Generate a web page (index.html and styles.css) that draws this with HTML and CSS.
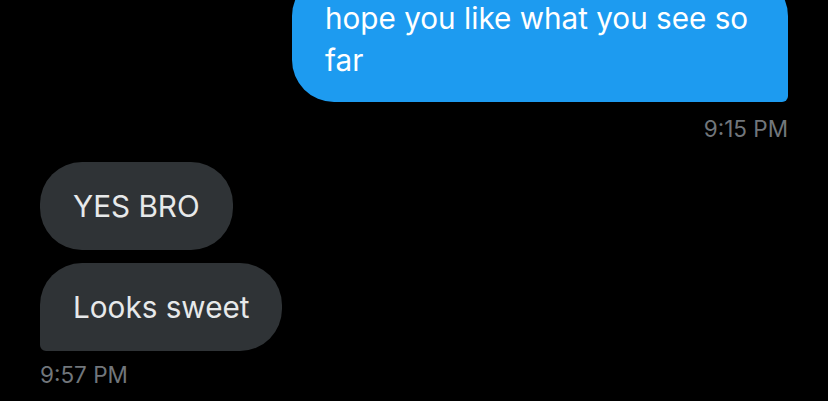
FILE: index.html
```html
<!DOCTYPE html>
<html lang="en">
  <head>
    <meta name="viewport" content="width=device-width, initial-scale=1.0" />
    <title>Messages</title>
    <link rel="stylesheet" href="styles.css">
  </head>
  <body>
    <div class="chat">
      <div class="msg out">
        <div class="bubble">hope you like what you see so far</div>
        <div class="time">9:15 PM</div>
      </div>
      <div class="msg in">
        <div class="bubble">YES BRO</div>
        <div class="bubble last">Looks sweet</div>
        <div class="time">9:57 PM</div>
      </div>
    </div>
  </body>
</html>
```

FILE: styles.css
```css
* {
  padding: 0;
  margin: 0;
  box-sizing: border-box;
  font-family: "Inter", "Liberation Sans", sans-serif;
}
body {
  background-color: #000;
  overflow: hidden;
}
.chat {
  padding: 0 40px;
  margin-top: -26px;
}
.msg {
  display: flex;
  flex-direction: column;
}
.msg.out {
  align-items: flex-end;
}
.msg.in {
  align-items: flex-start;
  margin-top: 18px;
}
.bubble {
  font-size: 29.7px;
  line-height: 42px;
  padding: 23px 33px;
  border-radius: 42px;
}
.out .bubble {
  background-color: #1d9bf0;
  color: #fff;
  max-width: 496px;
  width: 496px;
  padding-bottom: 21px;
  border-bottom-right-radius: 6px;
}
.in .bubble {
  background-color: #2f3336;
  color: #e7e9ea;
}
.in .bubble + .bubble {
  margin-top: 13px;
}
.in .bubble.last {
  border-bottom-left-radius: 6px;
}
.time {
  color: #71767b;
  font-size: 22.5px;
  line-height: 30px;
  margin-top: 12px;
}
.in .time {
  margin-top: 9px;
}
```
